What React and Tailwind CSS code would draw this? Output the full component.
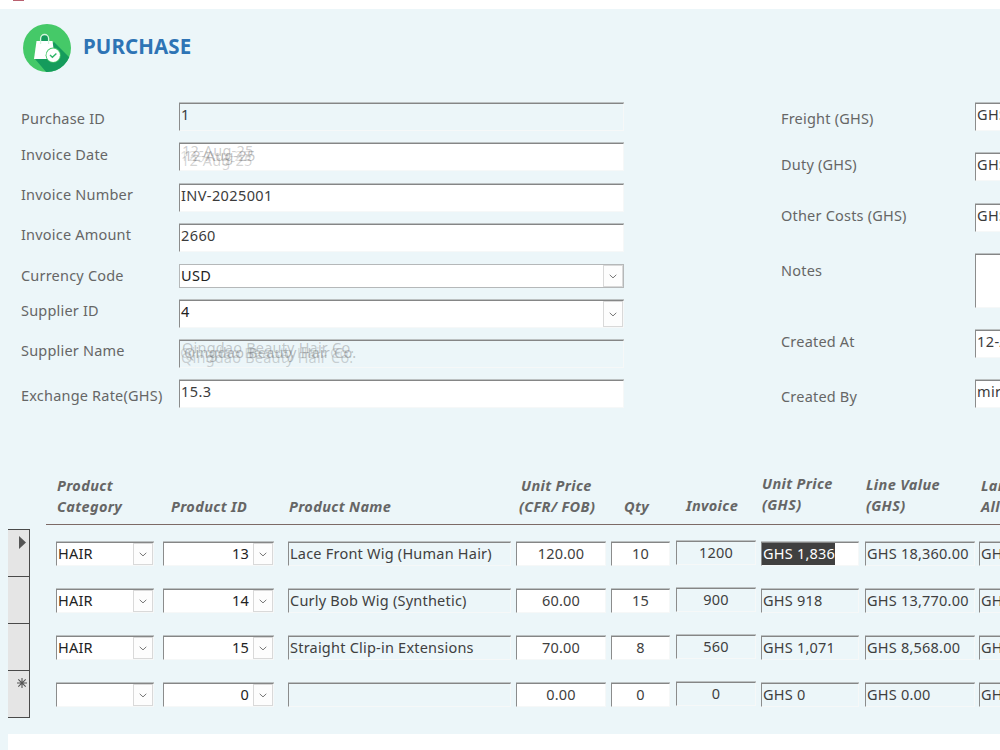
import React from 'react';
import clsx from 'clsx';

const leftFields = [
  { label: 'Purchase ID', value: '1', row: 'h-[40px]', pad: 'pt-[5px]', locked: true },
  { label: 'Invoice Date', ghost: '12-Aug-25', row: 'h-[41px]', pad: 'pt-px' },
  { label: 'Invoice Number', value: 'INV-2025001', row: 'h-[40px]', pad: 'pt-0' },
  { label: 'Invoice Amount', value: '2660', row: 'h-[40px]', pad: 'pt-0' },
  { label: 'Currency Code', value: 'USD', row: 'h-[36px]', pad: 'pt-px', flat: true, select: true },
  { label: 'Supplier ID', value: '4', row: 'h-[40px]', pad: 'pt-0', select: true },
  { label: 'Supplier Name', ghost: 'Qingdao Beauty Hair Co.', row: 'h-[40px]', pad: 'pt-0', locked: true },
  { label: 'Exchange Rate(GHS)', value: '15.3', row: 'h-[40px]', pad: 'pt-[5px]' },
];

const rightFields = [
  { label: 'Freight (GHS)', value: 'GHS 0.00', row: 'h-[50px]', pad: 'pt-[5px]' },
  { label: 'Duty (GHS)', value: 'GHS 0.00', row: 'h-[51px]', pad: 'pt-px' },
  { label: 'Other Costs (GHS)', value: 'GHS 0.00', row: 'h-[50px]', pad: 'pt-px' },
  { label: 'Notes', value: '', row: 'h-[76px]', pad: 'pt-[6px]', tall: true },
  { label: 'Created At', value: '12-Aug-25', row: 'h-[50px]', pad: 'pt-px' },
  { label: 'Created By', value: 'mireku', row: 'h-[40px]', pad: 'pt-[6px]' },
];

const lines = [
  { category: 'HAIR', id: 13, name: 'Lace Front Wig (Human Hair)', price: '120.00', qty: 10, invoice: 1200, unit: 'GHS 1,836', value: 'GHS 18,360.00', active: true },
  { category: 'HAIR', id: 14, name: 'Curly Bob Wig (Synthetic)', price: '60.00', qty: 15, invoice: 900, unit: 'GHS 918', value: 'GHS 13,770.00' },
  { category: 'HAIR', id: 15, name: 'Straight Clip-in Extensions', price: '70.00', qty: 8, invoice: 560, unit: 'GHS 1,071', value: 'GHS 8,568.00' },
  { category: '', id: 0, name: '', price: '0.00', qty: 0, invoice: 0, unit: 'GHS 0', value: 'GHS 0.00', blank: true },
];

const sunken = 'border border-t-[#858686] border-l-[#8b8c8c] border-r-[#f6f8f8] border-b-[#f6f8f8] shadow-[0_-1px_0_#bcc1c2]';

const Chevron = () => (
  <svg width="8" height="5" viewBox="0 0 8 5" fill="none">
    <path d="M0.7 0.8 L4 3.9 L7.3 0.8" stroke="#777" strokeWidth="1" />
  </svg>
);

const DropButton = ({ className }) => (
  <div className={clsx('flex shrink-0 items-center justify-center border border-[#d9d9d9] bg-[#fdfdfd]', className)}>
    <Chevron />
  </div>
);

// faded value, drawn three times slightly apart
const Ghost = ({ text }) => (
  <div className="relative h-full w-full tracking-[0.2px]">
    <span className="absolute -top-[4px] left-[2px] text-[#555]/30">{text}</span>
    <span className="absolute top-px left-[4px] text-[#555]/35">{text}</span>
    <span className="absolute top-px left-0 text-[#555]/20">{text}</span>
    <span className="absolute top-[6px] left-px text-[#555]/25">{text}</span>
  </div>
);

const Field = ({ field, labelWidth, boxWidth }) => (
  <div className={clsx('flex items-start', field.row)}>
    <div className={clsx('shrink-0 leading-5 tracking-[0.2px] text-[#666]', labelWidth, field.pad)}>{field.label}</div>
    <div
      className={clsx(
        'flex shrink-0 overflow-hidden leading-5 tracking-[0.4px] text-[#3b3b3b]',
        boxWidth,
        field.flat ? 'h-[24px] border border-[#b5b8b9]' : sunken,
        !field.flat && (field.tall ? 'h-[54px]' : 'h-[28px]'),
        !field.locked && 'bg-white'
      )}
    >
      {field.ghost ? (
        <Ghost text={field.ghost} />
      ) : (
        <span className={clsx('grow pl-px', field.select && 'text-[#222]')}>{field.value}</span>
      )}
      {field.select && <DropButton className="w-[20px]" />}
    </div>
  </div>
);

const Cell = ({ className, children, locked }) => (
  <div className={clsx('flex h-[24px] shrink-0 items-center overflow-hidden', sunken, !locked && 'bg-white', className)}>
    {children}
  </div>
);

const LineRow = ({ line }) => (
  <div className="flex h-[47px] items-start tracking-[0.22px] whitespace-nowrap text-[#404040]">
    <Cell className="w-[98px]">
      <span className="grow pl-px text-[#222]">{line.category}</span>
      <DropButton className="h-[22px] w-[20px]" />
    </Cell>
    <Cell className="ml-[9px] w-[111px]">
      <span className="grow pr-[4px] text-right text-[#222]">{line.id}</span>
      <DropButton className="h-[22px] w-[20px]" />
    </Cell>
    <Cell className="ml-[14px] w-[223px] pl-px" locked>{line.name}</Cell>
    <Cell className="ml-[5px] w-[90px] justify-center">{line.price}</Cell>
    <Cell className="ml-[5px] w-[59px] justify-center">{line.qty}</Cell>
    <Cell className="-mt-px ml-[6px] w-[80px] justify-center" locked>{line.invoice}</Cell>
    <Cell className="ml-[5px] w-[98px]" locked={!line.active}>
      <span className={clsx('h-[22px] pl-px leading-[21px]', line.active && 'bg-[#404040] text-white')}>{line.unit}</span>
    </Cell>
    <Cell className="ml-[6px] w-[110px] pl-px" locked>{line.value}</Cell>
    <Cell className="ml-[4px] w-[110px] pl-px" locked>GHS 0.00</Cell>
  </div>
);

const BagLogo = () => (
  <svg className="mt-[15px] ml-[23px] shrink-0" width="48" height="48" viewBox="0 0 48 48">
    <defs>
      <clipPath id="disc">
        <circle cx="24" cy="24" r="24" />
      </clipPath>
    </defs>
    <circle cx="24" cy="24" r="24" fill="#45c968" />
    <path d="M31 18 L56 43 L44 56 H30 L12 35 Z" fill="#159b5c" clipPath="url(#disc)" />
    <path d="M18 17 V14.5 a3.7 3.7 0 0 1 7.4 0 V17 Z" fill="#159b5c" />
    <path d="M13.5 17 H29.5 L32 35 H11 Z" fill="#fff" />
    <path d="M17.6 20 V14.5 a4 4 0 0 1 8 0 V20" fill="none" stroke="#d5f5de" strokeWidth="1.3" />
    <circle cx="30.2" cy="31.2" r="7.6" fill="#45c968" />
    <circle cx="30.2" cy="31.2" r="6.7" fill="#fff" />
    <path d="M27 31 L29.4 33.2 L33.4 29.4" fill="none" stroke="#2eb568" strokeWidth="1.4" />
  </svg>
);

const Head = ({ className, children }) => <div className={clsx('shrink-0', className)}>{children}</div>;

const App = () => {
  return (
    <div className="flex h-[750px] w-[1000px] flex-col overflow-hidden bg-[#ecf6f9] font-['Noto_Sans',sans-serif] text-[14.5px] whitespace-nowrap">
      <div className="h-[9px] shrink-0 bg-white">
        <div className="ml-[13px] h-[1px] w-[11px] bg-[#b9606f]" />
      </div>

      <header className="flex h-[93px] shrink-0">
        <BagLogo />
        <h1 className="mt-[23px] ml-[12px] text-[20.5px] leading-7 font-bold tracking-[0.1px] text-[#2e74b5]">PURCHASE</h1>
      </header>

      <section className="flex h-[373px] shrink-0 pt-px">
        <div className="ml-[21px] w-[760px] shrink-0">
          {leftFields.map((f) => (
            <Field key={f.label} field={f} labelWidth="w-[158px]" boxWidth="w-[445px]" />
          ))}
        </div>
        <div className="shrink-0">
          {rightFields.map((f) => (
            <Field key={f.label} field={f} labelWidth="w-[194px]" boxWidth="w-[300px]" />
          ))}
        </div>
      </section>

      <section className="shrink-0">
        <div className="ml-[46px] flex h-[50px] border-b border-[#7c6a66] leading-[21px] font-bold tracking-[0.35px] text-[#666] italic">
          <Head className="ml-[11px] w-[114px]">Product<br />Category</Head>
          <Head className="mt-[21px] w-[118px]">Product ID</Head>
          <Head className="mt-[21px] w-[230px]">Product Name</Head>
          <Head className="w-[105px]"><span className="pl-[2px]">Unit Price</span><br />(CFR/ FOB)</Head>
          <Head className="mt-[21px] w-[62px]">Qty</Head>
          <Head className="mt-[20px] w-[76px]">Invoice</Head>
          <Head className="-mt-[2px] w-[104px]">Unit Price<br />(GHS)</Head>
          <Head className="-mt-px w-[115px]">Line Value<br />(GHS)</Head>
          <Head>Landed<br />Allocation</Head>
        </div>
        <div className="mt-[4px] ml-[8px] flex items-start">
          <div className="w-[22px] shrink-0 border-t border-r border-[#4a4a4a] bg-[#e5e5e5]">
            {lines.map((line) => (
              <div key={line.id} className="flex h-[47px] justify-end border-b border-[#4a4a4a]">
                {line.active && (
                  <svg className="mt-[6px] mr-[3px]" width="7" height="13" viewBox="0 0 7 13">
                    <path d="M0 0 L7 6.5 L0 13 Z" fill="#555" />
                  </svg>
                )}
                {line.blank && (
                  <svg className="mt-[7px] mr-[2px]" width="10" height="10" viewBox="0 0 10 10">
                    <path d="M5 0 V10 M0 5 H10 M1.3 1.3 L8.7 8.7 M8.7 1.3 L1.3 8.7" stroke="#555" strokeWidth="1.1" />
                  </svg>
                )}
              </div>
            ))}
          </div>
          <div className="mt-[13px] ml-[26px] h-[176px]">
            {lines.map((line) => (
              <LineRow key={line.id} line={line} />
            ))}
          </div>
        </div>
      </section>

      <div className="mt-[16px] ml-[8px] h-[20px] shrink-0 bg-white" />
    </div>
  );
};

export default App;
